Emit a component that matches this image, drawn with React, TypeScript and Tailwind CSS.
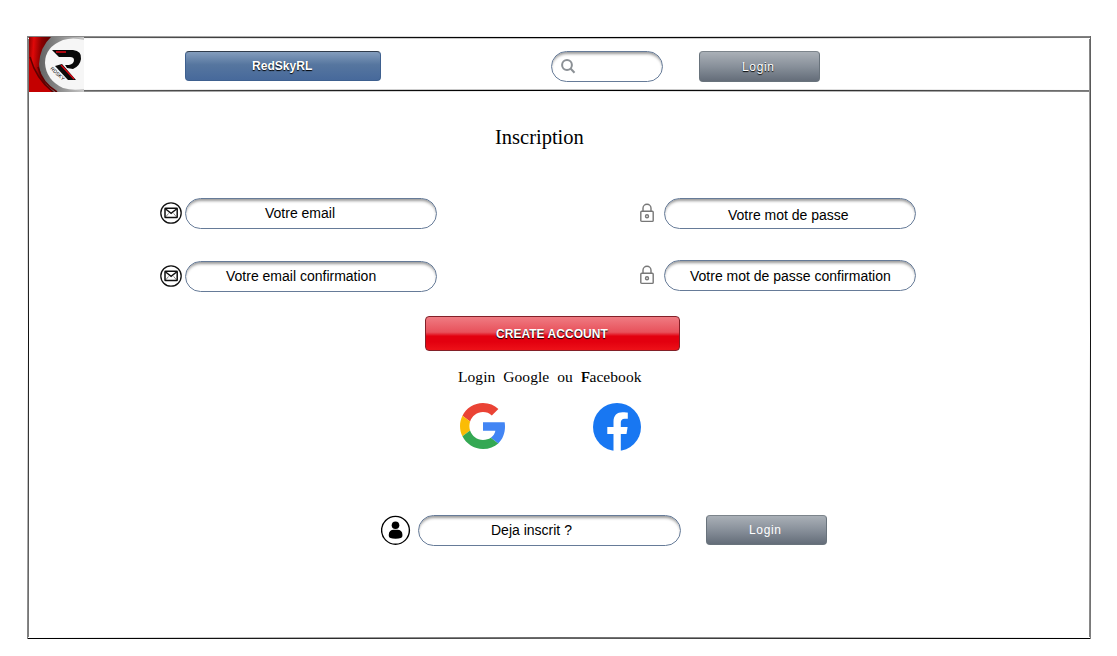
import React from "react";

const pillClass =
  "flex h-[31px] shrink-0 items-start rounded-full border border-[#667b98] bg-white font-['Liberation_Sans',sans-serif] text-[14px] leading-[16px] whitespace-nowrap text-black shadow-[inset_0_3px_3px_-1px_rgba(0,0,0,0.4)]";

function Pill({ className, children }: { className: string; children?: React.ReactNode }) {
  return <div className={`${pillClass} ${className}`}>{children}</div>;
}

function LoginButton({ className }: { className: string }) {
  return (
    <button
      className={`flex w-[121px] shrink-0 items-center rounded-[4px] border border-[#69737c] border-t-[#7c848b] bg-linear-to-b from-[#aab0b7] via-[#88909a] to-[#646d79] font-['Liberation_Sans',sans-serif] text-[12px] leading-[14px] tracking-[0.65px] text-white ${className}`}
    >
      Login
    </button>
  );
}

function MailIcon() {
  return (
    <svg className="h-[22px] w-[22px] shrink-0" viewBox="0 0 22 22" fill="none" stroke="#111">
      <circle cx="11" cy="11" r="10.2" strokeWidth="1.3" />
      <rect x="5" y="6.2" width="12.2" height="9.4" rx="0.5" strokeWidth="1.5" />
      <path d="M5.3 6.8 11.1 11.4 16.9 6.8" strokeWidth="1.4" />
      <path d="M5.6 15 8.6 11.4M16.6 15 13.6 11.4" strokeWidth="0.5" />
    </svg>
  );
}

function LockIcon() {
  return (
    <svg className="h-[20px] w-[14px] shrink-0" viewBox="0 0 14 20" fill="none" stroke="#777" strokeWidth="1.4">
      <rect x="0.8" y="8.2" width="12.4" height="10.2" rx="1" />
      <path d="M3 8V5.2a4 4 0 0 1 8 0V8" />
      <circle cx="7" cy="13.2" r="1.5" />
    </svg>
  );
}

function UserIcon() {
  return (
    <svg className="h-[30px] w-[30px] shrink-0" viewBox="0 0 30 30">
      <circle cx="14.5" cy="15.3" r="13.9" fill="white" stroke="#000" strokeWidth="1.4" />
      <circle cx="14.5" cy="10.3" r="3.8" />
      <path d="M7.8 21v-1.5a4.8 4.8 0 0 1 4.8-4.8h4a4.8 4.8 0 0 1 4.8 4.8V21q0 2.8-6.8 2.8T7.8 21Z" />
    </svg>
  );
}

function Logo() {
  return (
    <svg className="block h-[55px] w-[55px]" viewBox="0 0 55 55">
      <defs>
        <linearGradient id="red" x1="0" y1="0" x2="1" y2="0.15">
          <stop offset="0" stopColor="#8d0000" />
          <stop offset="0.2" stopColor="#e00808" />
          <stop offset="0.5" stopColor="#8a0000" />
          <stop offset="1" stopColor="#4a0000" />
        </linearGradient>
        <linearGradient id="silver" x1="0" y1="0" x2="1" y2="0">
          <stop offset="0" stopColor="#505050" />
          <stop offset="0.5" stopColor="#858585" />
          <stop offset="1" stopColor="#c8c8c8" />
        </linearGradient>
      </defs>
      <rect width="55" height="55" fill="url(#silver)" />
      <path d="M0 0H22Q11 10 10 27 11 44 25 55H0Z" fill="url(#red)" />
      <path d="M55 3Q44 0 34 3 16 10 16 26 17 43 34 51 44 54 55 52Z" fill="#f6f6f6" />
      <path d="M0 18Q5 40 24 55H0Z" fill="#c40000" />
      <path d="M1 20Q7 42 24 55M9 30Q13 46 28 55" fill="none" stroke="#600000" strokeWidth="1.5" />
      <path d="M23 13H44Q53 14 52 22 51 29 44 32L38 31 36 28H40Q45 27 45 23 45 20 41 20H30Z" fill="#080808" />
      <path d="M26 29 33 27 47 43H39Z" fill="#0b0b0b" />
      <path d="M27 15H37M32 28 45 42" stroke="#e30613" strokeWidth="1.3" />
      <text transform="translate(21 32) rotate(43)" fontSize="5" fontFamily="Liberation Sans, sans-serif">RDSKY</text>
    </svg>
  );
}

export default function App() {
  return (
    <main className="h-[656px] w-[1117px] overflow-hidden bg-white pt-[36px] pl-[27px] font-['Liberation_Serif',serif] text-black">
      <div className="w-[1064px] bg-[linear-gradient(#808080,#fff,#808080),linear-gradient(#808080,#111,#808080),linear-gradient(#808080,#fff,#808080),linear-gradient(#666,#111,#808080)] bg-[length:1px_100%] bg-[position:0_0,1px_0,1062px_0,1063px_0] bg-no-repeat px-[2px]">
        <div className="-mx-px flex flex-col">
          <div className="h-px bg-linear-to-r from-[#808080] via-white to-[#808080]" />
          <div className="h-px bg-linear-to-r from-[#777] via-black to-[#777]" />
          <div className="h-px bg-linear-to-r from-white via-[#bbb] to-white" />
        </div>
        <header className="flex h-[50px] items-start">
          <div className="relative z-10 -mt-[2px] h-[50px] w-[55px] shrink-0"><Logo /></div>
          <button className="mt-[12px] ml-[101px] flex h-[30px] w-[196px] shrink-0 items-center rounded-[4px] border border-[#3e608f] border-t-[#303c4c] bg-linear-to-b from-[#849dbd] via-[#56769f] via-45% to-[#47699b] pl-[66px] font-['Liberation_Sans',sans-serif] text-[12px] leading-[14px] font-bold tracking-[0.05px] text-white [text-shadow:0_1px_1px_#000]">
            RedSkyRL
          </button>
          <Pill className="mt-[12px] ml-[170px] w-[112px] pt-[7px] pl-[9px]">
            <svg className="h-[15px] w-[15px]" viewBox="0 0 15 15" fill="none" stroke="#8b9095" strokeWidth="2">
              <circle cx="6" cy="6" r="4.9" />
              <path d="m9.5 9.5 4 4.3" />
            </svg>
          </Pill>
          <LoginButton className="mt-[12px] ml-[36px] h-[31px] pl-[42px] [text-shadow:0_1px_1px_#000]" />
        </header>
        <div className="flex flex-col">
          <div className="h-px bg-linear-to-r from-white via-[#bbb] to-white" />
          <div className="h-px bg-linear-to-r from-[#777] via-black to-[#777]" />
          <div className="h-px bg-linear-to-r from-[#808080] via-white to-[#808080]" />
        </div>
        <h1 className="mt-[33px] ml-[466px] h-[24px] text-[20.5px] leading-[24px]">Inscription</h1>
        <div className="mt-[49px] flex h-[31px] items-start pl-[131px]">
          <div className="mt-[4px]"><MailIcon /></div>
          <Pill className="ml-[3px] w-[252px] pt-[6px] pl-[79px]">Votre email</Pill>
          <div className="mt-[5px] ml-[203px]"><LockIcon /></div>
          <Pill className="ml-[10px] w-[252px] pt-[8px] pl-[63px]">Votre mot de passe</Pill>
        </div>
        <div className="mt-[31px] flex h-[32px] items-start pl-[131px]">
          <div className="mt-[5px]"><MailIcon /></div>
          <Pill className="mt-px ml-[3px] w-[252px] pt-[6px] pl-[40px]">Votre email confirmation</Pill>
          <div className="mt-[5px] ml-[203px]"><LockIcon /></div>
          <Pill className="ml-[10px] w-[252px] pt-[7px] pl-[25px]">Votre mot de passe confirmation</Pill>
        </div>
        <button className="mt-[24px] ml-[396px] flex h-[35px] w-[255px] items-center rounded-[4px] border border-[#822028] bg-[linear-gradient(#ef7b82_0%,#e8515b_46%,#e3000f_58%,#e3000f_75%,#ed1118_100%)] pl-[70px] font-['Liberation_Sans',sans-serif] text-[12px] leading-[14px] font-bold tracking-[0.03px] text-white [text-shadow:0_1px_1px_#000]">
          CREATE ACCOUNT
        </button>
        <p className="mt-[17px] ml-[429px] h-[18px] text-[15.5px] leading-[18px] tracking-[0.06px] whitespace-nowrap [word-spacing:4px]">
          Login Google ou <span className="[text-shadow:0.4px_0_0_#000]">F</span>acebook
        </p>
        <div className="mt-[17px] flex h-[48px] items-start pl-[431px]">
          <svg className="h-[46px] w-[46px]" viewBox="0 0 48 48">
            <path fill="#EA4335" d="M24 9.5c3.54 0 6.71 1.22 9.21 3.6l6.85-6.85C35.9 2.38 30.47 0 24 0 14.62 0 6.51 5.38 2.56 13.22l7.98 6.19C12.43 13.72 17.74 9.5 24 9.5z" />
            <path fill="#4285F4" d="M46.98 24.55c0-1.57-.15-3.09-.38-4.55H24v9.02h12.94c-.58 2.96-2.26 5.48-4.78 7.18l7.73 6c4.51-4.18 7.09-10.36 7.09-17.65z" />
            <path fill="#FBBC05" d="M10.53 28.59c-.48-1.45-.76-2.99-.76-4.59s.27-3.14.76-4.59l-7.98-6.19C.92 16.46 0 20.12 0 24c0 3.88.92 7.54 2.56 10.78l7.97-6.19z" />
            <path fill="#34A853" d="M24 48c6.48 0 11.93-2.13 15.89-5.81l-7.73-6c-2.15 1.45-4.92 2.3-8.16 2.3-6.26 0-11.57-4.22-13.47-9.91l-7.98 6.19C6.51 42.62 14.62 48 24 48z" />
          </svg>
          <svg className="ml-[87px] h-[48px] w-[48px]" viewBox="0 0 48 48">
            <circle cx="24" cy="24" r="24" fill="#1877f2" />
            <path fill="white" d="M20.5 48V31h-6.2v-7h6.2v-5.4c0-6.1 3.6-9.3 9.1-9.3 2.6 0 5.2.4 5.2.4v6.1h-3c-3 0-4 1.8-4 3.7V24h6.8l-1.1 7h-5.7v17Z" />
          </svg>
        </div>
        <div className="mt-[64px] flex h-[31px] items-start pl-[352px]">
          <UserIcon />
          <Pill className="ml-[7px] w-[263px] pt-[6px] pl-[72px]">Deja inscrit ?</Pill>
          <LoginButton className="ml-[25px] h-[30px] pl-[42px]" />
        </div>
        <div className="-mx-px mt-[91px] flex flex-col">
          <div className="h-px bg-linear-to-r from-white via-[#666] to-white" />
          <div className="h-px bg-linear-to-r from-black via-[#666] to-black" />
        </div>
      </div>
    </main>
  );
}
